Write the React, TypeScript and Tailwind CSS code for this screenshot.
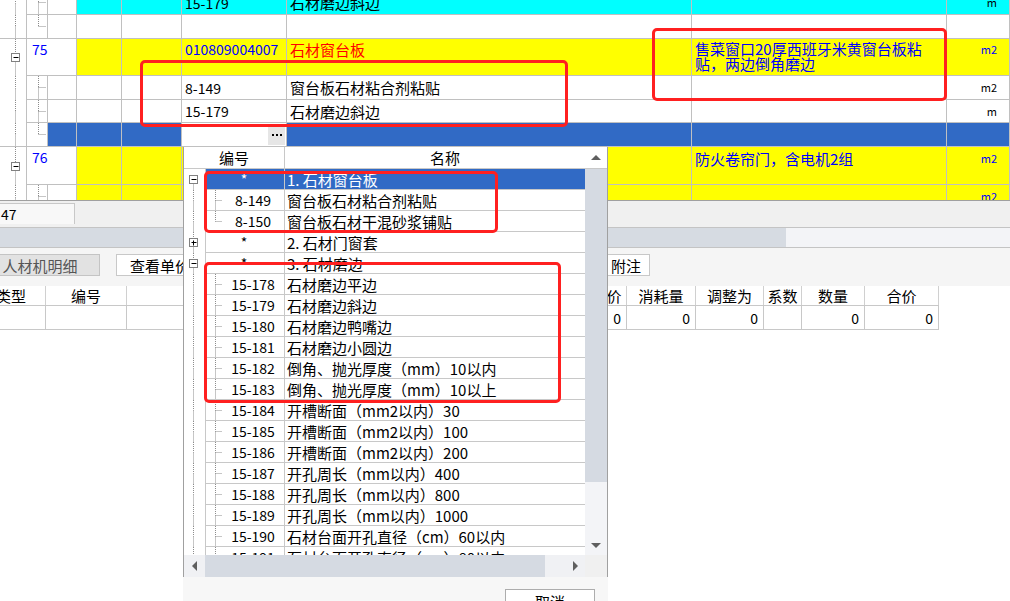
import type { ReactNode } from 'react'

type TreeProps = {
  w: number
  h: number
  x: number
  top?: boolean
  bottom?: boolean
  tick?: number
  box?: 'plus' | 'minus'
}

// dotted tree connector, like the old win32 tree grid
function Tree({ w, h, x, top = true, bottom = true, tick, box }: TreeProps) {
  const mid = Math.floor(h / 2) + 0.5
  const cx = x + 0.5
  return (
    <svg width={w} height={h} className="block shrink-0">
      {top && <line x1={cx} y1={0} x2={cx} y2={mid} stroke="#8c8c8c" strokeDasharray="1 1" />}
      {bottom && <line x1={cx} y1={mid} x2={cx} y2={h} stroke="#8c8c8c" strokeDasharray="1 1" />}
      {tick && <line x1={cx} y1={mid} x2={tick} y2={mid} stroke="#8c8c8c" strokeDasharray="1 1" />}
      {box && (
        <g>
          <rect x={cx - 4} y={mid - 4} width={8} height={8} fill="#fff" stroke="#808080" />
          <line x1={cx - 2} y1={mid} x2={cx + 3} y2={mid} stroke="#000" />
          {box === 'plus' && <line x1={cx} y1={mid - 2} x2={cx} y2={mid + 3} stroke="#000" />}
        </g>
      )}
    </svg>
  )
}

function Cell({ className = '', children }: { className?: string; children?: ReactNode }) {
  return (
    <div className={`shrink-0 overflow-hidden border-r border-b border-[#c0c0c0] ${className}`}>
      {children}
    </div>
  )
}

function Arrow({ dir }: { dir: 'up' | 'down' | 'left' | 'right' }) {
  const pts = {
    up: '0,5 5,0 10,5',
    down: '0,0 10,0 5,5',
    left: '5,0 5,10 0,5',
    right: '0,0 0,10 5,5',
  }[dir]
  const vertical = dir === 'up' || dir === 'down'
  return (
    <svg width={vertical ? 10 : 5} height={vertical ? 5 : 10} className="block">
      <polygon points={pts} fill="#5f5f5f" />
    </svg>
  )
}

const code = 'flex pl-[3px] text-[14px]'
const unit = 'flex justify-end pr-[12px] text-[11px]'

function TopGrid() {
  return (
    <div className="h-[200px] overflow-hidden">
      <div className="-mt-[9px]">
        {/* 上一组的最后两行 */}
        <div className="flex h-[24px]">
          <div className="w-[27px] shrink-0 border-r border-[#c0c0c0] bg-white">
            <Tree w={26} h={24} x={15} />
          </div>
          <Cell className="w-[21px] bg-white">
            <Tree w={20} h={23} x={11} tick={19} />
          </Cell>
          <Cell className="w-[29px] bg-white" />
          <Cell className="w-[45px] bg-[#00ffff]" />
          <Cell className="w-[60px] bg-[#00ffff]" />
          <Cell className={`w-[105px] items-center bg-[#00ffff] ${code}`}>15-179</Cell>
          <Cell className="flex w-[405px] items-center bg-[#00ffff] pl-[3px]">石材磨边斜边</Cell>
          <Cell className="w-[255px] bg-[#00ffff]" />
          <Cell className={`w-[63px] items-center bg-[#00ffff] ${unit}`}>m</Cell>
        </div>
        <div className="flex h-[24px]">
          <div className="w-[27px] shrink-0 border-r border-b border-[#c0c0c0] bg-white">
            <Tree w={26} h={23} x={15} />
          </div>
          <Cell className="w-[21px] bg-white">
            <Tree w={20} h={23} x={11} tick={19} bottom={false} />
          </Cell>
          <Cell className="w-[29px] bg-white" />
          <Cell className="w-[45px] bg-white" />
          <Cell className="w-[60px] bg-white" />
          <Cell className="w-[105px] bg-white" />
          <Cell className="w-[405px] bg-white" />
          <Cell className="w-[255px] bg-white" />
          <Cell className="w-[63px] bg-white" />
        </div>

        {/* 75 */}
        <div className="flex h-[37px]">
          <div className="w-[27px] shrink-0 border-r border-[#c0c0c0] bg-white">
            <Tree w={26} h={37} x={15} box="minus" />
          </div>
          <Cell className="w-[50px] bg-white pl-[5px] pt-[3px] text-[14px] text-[#0000ff]">75</Cell>
          <Cell className="w-[45px] bg-[#ffff00]" />
          <Cell className="w-[60px] bg-[#ffff00]" />
          <Cell className={`w-[105px] bg-[#ffff00] pt-[3px] text-[#0000ff] ${code}`}>010809004007</Cell>
          <Cell className="w-[405px] bg-[#ffff00] pl-[3px] pt-[3px] text-[#ff0000]">石材窗台板</Cell>
          <Cell className="w-[255px] bg-[#ffff00] pl-[3px] pt-[2px] leading-[15px] text-[#0000ff]">
            售菜窗口20厚西班牙米黄窗台板粘
            <br />
            贴，两边倒角磨边
          </Cell>
          <Cell className={`w-[63px] bg-[#ffff00] pt-[5px] text-[#0000ff] ${unit}`}>m2</Cell>
        </div>
        <div className="flex h-[24px]">
          <div className="w-[27px] shrink-0 border-r border-[#c0c0c0] bg-white">
            <Tree w={26} h={24} x={15} />
          </div>
          <Cell className="w-[21px] bg-white">
            <Tree w={20} h={23} x={11} tick={19} />
          </Cell>
          <Cell className="w-[29px] bg-white" />
          <Cell className="w-[45px] bg-white" />
          <Cell className="w-[60px] bg-white" />
          <Cell className={`w-[105px] items-center bg-white ${code}`}>8-149</Cell>
          <Cell className="flex w-[405px] items-center bg-white pl-[3px]">窗台板石材粘合剂粘贴</Cell>
          <Cell className="w-[255px] bg-white" />
          <Cell className={`w-[63px] items-center bg-white ${unit}`}>m2</Cell>
        </div>
        <div className="flex h-[23px]">
          <div className="w-[27px] shrink-0 border-r border-[#c0c0c0] bg-white">
            <Tree w={26} h={23} x={15} />
          </div>
          <Cell className="w-[21px] bg-white">
            <Tree w={20} h={22} x={11} tick={19} />
          </Cell>
          <Cell className="w-[29px] bg-white" />
          <Cell className="w-[45px] bg-white" />
          <Cell className="w-[60px] bg-white" />
          <Cell className={`w-[105px] items-center bg-white ${code}`}>15-179</Cell>
          <Cell className="flex w-[405px] items-center bg-white pl-[3px]">石材磨边斜边</Cell>
          <Cell className="w-[255px] bg-white" />
          <Cell className={`w-[63px] items-center bg-white ${unit}`}>m</Cell>
        </div>
        {/* 正在编辑的空行 */}
        <div className="flex h-[24px]">
          <div className="w-[27px] shrink-0 border-r border-b border-[#c0c0c0] bg-white">
            <Tree w={26} h={23} x={15} />
          </div>
          <Cell className="w-[21px] bg-white">
            <Tree w={20} h={23} x={11} tick={19} bottom={false} />
          </Cell>
          <Cell className="w-[29px] bg-[#316ac5]" />
          <Cell className="w-[45px] bg-[#316ac5]" />
          <Cell className="w-[60px] bg-[#316ac5]" />
          <Cell className="flex w-[105px] items-center justify-end bg-white pr-[1px]">
            <div className="flex h-[20px] w-[17px] items-center justify-center gap-[2px] bg-[#e6e6e6]">
              <span className="h-[2px] w-[2px] bg-black" />
              <span className="h-[2px] w-[2px] bg-black" />
              <span className="h-[2px] w-[2px] bg-black" />
            </div>
          </Cell>
          <Cell className="w-[405px] bg-[#316ac5]" />
          <Cell className="w-[255px] bg-[#316ac5]" />
          <Cell className="w-[63px] bg-[#316ac5]" />
        </div>

        {/* 76 */}
        <div className="flex h-[38px]">
          <div className="w-[27px] shrink-0 border-r border-[#c0c0c0] bg-white">
            <Tree w={26} h={38} x={15} box="minus" />
          </div>
          <Cell className="w-[50px] bg-white pl-[5px] pt-[3px] text-[14px] text-[#0000ff]">76</Cell>
          <Cell className="w-[45px] bg-[#ffff00]" />
          <Cell className="w-[60px] bg-[#ffff00]" />
          <Cell className="w-[105px] bg-[#ffff00]" />
          <Cell className="w-[405px] bg-[#ffff00]" />
          <Cell className="w-[255px] bg-[#ffff00] pl-[3px] pt-[4px] text-[#0000ff]">防火卷帘门，含电机2组</Cell>
          <Cell className={`w-[63px] bg-[#ffff00] pt-[6px] text-[#0000ff] ${unit}`}>m2</Cell>
        </div>
        <div className="flex h-[24px]">
          <div className="w-[27px] shrink-0 border-r border-[#c0c0c0] bg-white">
            <Tree w={26} h={24} x={15} />
          </div>
          <Cell className="w-[21px] bg-white">
            <Tree w={20} h={23} x={11} tick={19} />
          </Cell>
          <Cell className="w-[29px] bg-white" />
          <Cell className="w-[45px] bg-[#ffff00]" />
          <Cell className="w-[60px] bg-[#ffff00]" />
          <Cell className="w-[105px] bg-[#ffff00]" />
          <Cell className="w-[405px] bg-[#ffff00]" />
          <Cell className="w-[255px] bg-[#ffff00]" />
          <Cell className={`w-[63px] items-center bg-[#ffff00] text-[#0000ff] ${unit}`}>m2</Cell>
        </div>
      </div>
    </div>
  )
}

const hd = 'flex shrink-0 items-center justify-center border-r border-[#d0d0d0]'
const td = 'flex shrink-0 items-center justify-end border-r border-[#c8c8c8] pr-[5px] text-[14px]'

function DetailPanel() {
  return (
    <>
      <div className="flex h-[27px] border-t border-[#a0a0a0] bg-[#f0f0f0]">
        <div className="mt-[2px] flex h-[21px] w-[75px] items-center border-t border-r border-[#c8c8c8] bg-[#f8f8f8] pl-[1px] text-[14px]">
          47
        </div>
      </div>
      <div className="flex h-[21px] border-t border-b border-[#c4c4c4]">
        <div className="w-[786px] bg-[#d6dbe2]" />
        <div className="flex-1 bg-[#f3f4f7]" />
      </div>
      <div className="flex h-[38px] items-start bg-[#f5f5f5] pt-[6px] whitespace-nowrap">
        <div className="-ml-[20px] flex h-[22px] w-[120px] shrink-0 items-center justify-center border border-[#c4c4c4] bg-[#e2e2e2] text-[#555]">
          人材机明细
        </div>
        <div className="ml-[16px] flex h-[22px] w-[100px] shrink-0 items-center overflow-hidden border border-[#c8c8c8] bg-white pl-[13px]">
          查看单价构成
        </div>
        <div className="ml-[386px] flex h-[22px] w-[48px] shrink-0 items-center justify-center border border-[#c8c8c8] bg-white">
          附注
        </div>
      </div>
      <div className="flex h-[20px] w-[939px] border-b border-[#c8c8c8] bg-white">
        <div className={`${hd} w-[46px] justify-end whitespace-nowrap pr-[19px]`}>类型</div>
        <div className={`${hd} w-[81px]`}>编号</div>
        <div className={`${hd} w-[460px]`}>名称</div>
        <div className={`${hd} w-[40px]`}>单价</div>
        <div className={`${hd} w-[69px]`}>消耗量</div>
        <div className={`${hd} w-[68px]`}>调整为</div>
        <div className={`${hd} w-[38px]`}>系数</div>
        <div className={`${hd} w-[63px]`}>数量</div>
        <div className={`${hd} w-[74px]`}>合价</div>
      </div>
      <div className="flex h-[24px] w-[939px] border-b border-[#c8c8c8] bg-white">
        <div className={`${td} w-[46px]`} />
        <div className={`${td} w-[81px]`} />
        <div className={`${td} w-[460px]`} />
        <div className={`${td} w-[40px]`}>0</div>
        <div className={`${td} w-[69px]`}>0</div>
        <div className={`${td} w-[68px]`}>0</div>
        <div className={`${td} w-[38px]`} />
        <div className={`${td} w-[63px]`}>0</div>
        <div className={`${td} w-[74px]`}>0</div>
      </div>
    </>
  )
}

type Item = {
  code: string
  name: string
  parent?: boolean
  box?: 'plus' | 'minus'
  last?: boolean
  sel?: boolean
}

const items: Item[] = [
  { code: '*', name: '1. 石材窗台板', parent: true, box: 'minus', sel: true },
  { code: '8-149', name: '窗台板石材粘合剂粘贴' },
  { code: '8-150', name: '窗台板石材干混砂浆铺贴', last: true },
  { code: '*', name: '2. 石材门窗套', parent: true, box: 'plus' },
  { code: '*', name: '3. 石材磨边', parent: true, box: 'minus' },
  { code: '15-178', name: '石材磨边平边' },
  { code: '15-179', name: '石材磨边斜边' },
  { code: '15-180', name: '石材磨边鸭嘴边' },
  { code: '15-181', name: '石材磨边小圆边' },
  { code: '15-182', name: '倒角、抛光厚度（mm）10以内' },
  { code: '15-183', name: '倒角、抛光厚度（mm）10以上' },
  { code: '15-184', name: '开槽断面（mm2以内）30' },
  { code: '15-185', name: '开槽断面（mm2以内）100' },
  { code: '15-186', name: '开槽断面（mm2以内）200' },
  { code: '15-187', name: '开孔周长（mm以内）400' },
  { code: '15-188', name: '开孔周长（mm以内）800' },
  { code: '15-189', name: '开孔周长（mm以内）1000' },
  { code: '15-190', name: '石材台面开孔直径（cm）60以内' },
  { code: '15-191', name: '石材台面开孔直径（cm）80以内' },
]

function Picker() {
  return (
    <div className="absolute top-[147px] left-[183px] flex h-[454px] w-[425px] flex-col">
      <div className="border-r border-l border-[#a0a0a0]">
        <div className="flex h-[22px] border-b border-[#c8c8c8] bg-white">
          <div className="flex w-[101px] items-center justify-center border-r border-[#c8c8c8]">编号</div>
          <div className="flex w-[300px] items-center justify-center pl-[20px]">名称</div>
          <div className="flex w-[22px] items-center justify-center">
            <Arrow dir="up" />
          </div>
        </div>
        <div className="flex h-[386px]">
          <div className="w-[401px] overflow-hidden bg-white">
            {items.map((r, i) => (
              <div key={i} className="flex h-[21px]">
                <div className="w-[21px] shrink-0 bg-white">
                  <Tree w={21} h={21} x={9} top={i > 0} box={r.box} />
                </div>
                <div
                  className={`flex w-[80px] shrink-0 items-center border-r border-b border-l border-[#c8c8c8] ${
                    r.sel ? 'bg-[#316ac5] text-white' : 'bg-white'
                  }`}
                >
                  {r.parent ? (
                    <span className="flex-1 pr-[2px] text-center text-[14px]">*</span>
                  ) : (
                    <>
                      <Tree w={16} h={20} x={9} tick={16} bottom={!r.last} />
                      <span className="flex-1 text-center text-[14px]">{r.code}</span>
                    </>
                  )}
                </div>
                <div
                  className={`flex w-[300px] shrink-0 items-center border-b border-[#c8c8c8] pl-[2px] whitespace-nowrap ${
                    r.sel ? 'bg-[#316ac5] text-white' : 'bg-white'
                  }`}
                >
                  {r.name}
                </div>
              </div>
            ))}
          </div>
          <div className="flex w-[22px] flex-col bg-[#f3f4f7]">
            <div className="h-[313px] bg-[#d5dae2]" />
            <div className="flex-1" />
            <div className="flex h-[20px] items-center justify-center">
              <Arrow dir="down" />
            </div>
          </div>
        </div>
        <div className="flex h-[22px] bg-[#f0f1f4]">
          <div className="flex w-[21px] items-center justify-center">
            <Arrow dir="left" />
          </div>
          <div className="w-[340px] bg-[#d5dae2]" />
          <div className="w-[20px]" />
          <div className="flex w-[20px] items-center justify-center">
            <Arrow dir="right" />
          </div>
          <div className="w-[22px] bg-[#f0f0f0]" />
        </div>
      </div>
      <div className="flex-1 bg-[#f7f7f7] pt-[12px] pl-[322px]">
        <div className="flex h-[24px] w-[90px] items-center justify-center border border-[#adadad] bg-white">
          取消
        </div>
      </div>
    </div>
  )
}

const mark = 'pointer-events-none absolute rounded-[5px] border-[3px] border-[#ff2020]'

function Marks() {
  return (
    <>
      <div className={`${mark} top-[60px] left-[140px] h-[67px] w-[428px]`} />
      <div className={`${mark} top-[28px] left-[652px] h-[73px] w-[295px]`} />
      <div className={`${mark} top-[171px] left-[204px] h-[62px] w-[294px]`} />
      <div className={`${mark} top-[262px] left-[204px] h-[141px] w-[357px]`} />
    </>
  )
}

export default function App() {
  return (
    <div className="relative h-[601px] w-[1010px] overflow-hidden bg-white font-['Noto_Sans_CJK_SC',sans-serif] text-[15px] leading-none text-black">
      <TopGrid />
      <DetailPanel />
      <Picker />
      <Marks />
    </div>
  )
}
